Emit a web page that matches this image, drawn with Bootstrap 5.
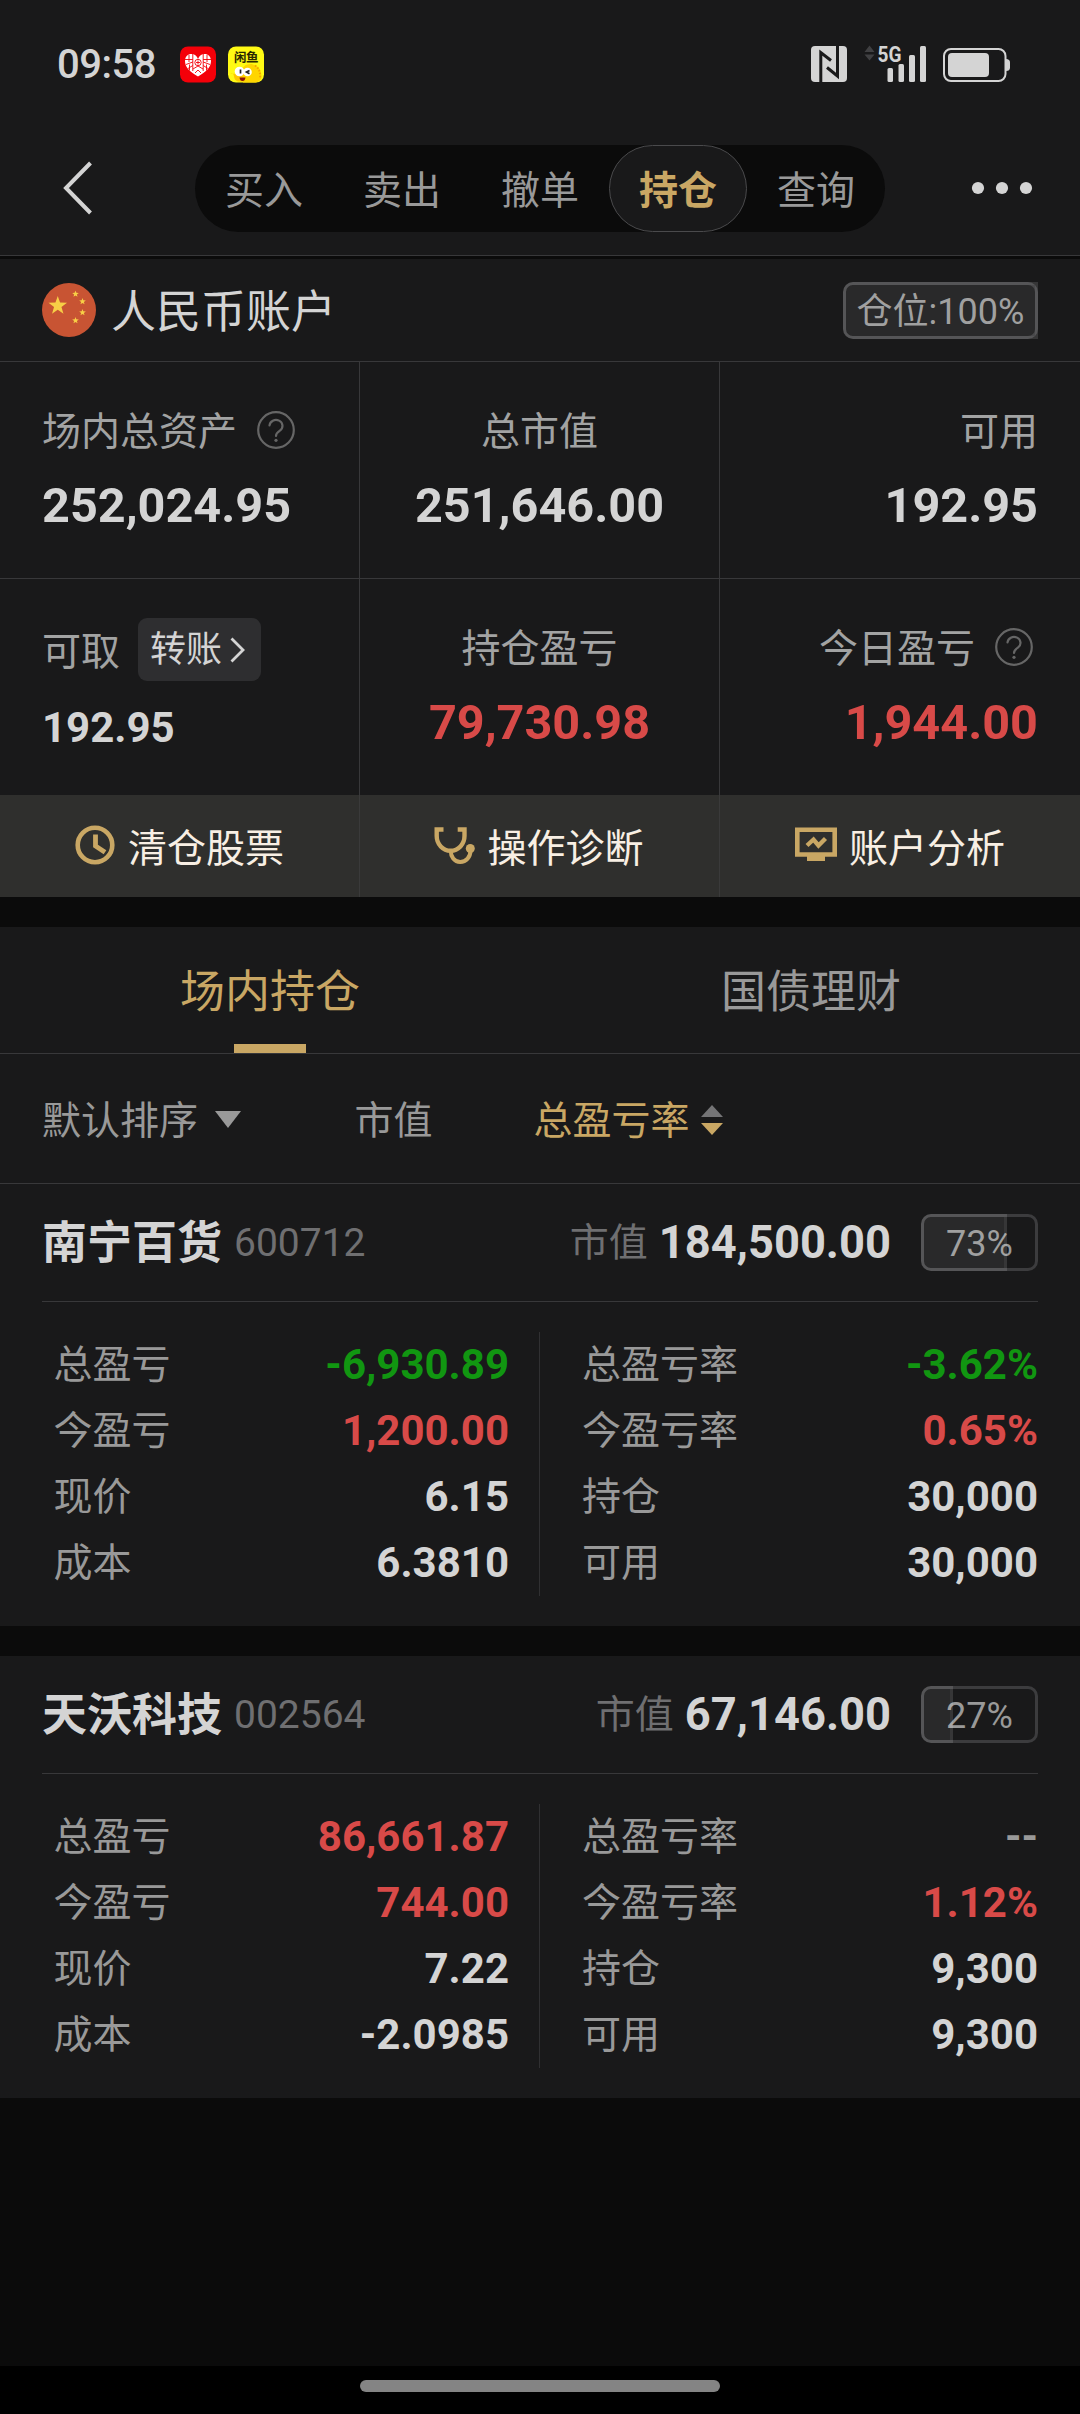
<!DOCTYPE html>
<html lang="zh-CN" data-bs-theme="dark">
<head>
<meta charset="utf-8">
<meta name="viewport" content="width=device-width, initial-scale=1">
<title>持仓</title>
<link href="https://cdn.jsdelivr.net/npm/bootstrap@5.3.0/dist/css/bootstrap.min.css" rel="stylesheet">
<style>
:root{--panel:#19191a;--ground:#0b0b0b;--rule:#38383a;--gold:#c9a764;--ink:#d4d4d4;--soft:#999;--label:#a2a3a3;--dim:#6f6f71;--up:#d84a48;--down:#119611}
body{font-family:Roboto,"Noto Sans CJK SC",sans-serif;background:var(--ground);color:var(--ink);font-size:39px;line-height:50px;min-height:2414px;overflow-x:hidden}
svg{display:block;flex:none;overflow:visible}
.panel{background:var(--panel)}
.px-page{padding-left:42px;padding-right:42px}
.c-label{color:var(--label)}.c-soft{color:var(--soft)}.c-dim{color:var(--dim)}.c-up{color:var(--up)}.c-down{color:var(--down)}.c-gold{color:var(--gold)}.c-ink{color:var(--ink)}
.statusbar{height:130px;padding:46px 70px 0 57px}
.clock-time{font-size:40px;line-height:37px;font-weight:500;width:123px;letter-spacing:-.5px}
.topbar{height:126px;border-bottom:1px solid var(--rule);padding:15px 47px 24px 64px}
.switcher{width:690px;height:87px;border-radius:44px;background:var(--ground);flex-wrap:nowrap;margin-left:103px}
.switcher .nav-link{width:138px;height:87px;padding:0;line-height:90px;border-radius:44px;border:1px solid transparent;color:var(--soft);text-align:center}
.switcher .nav-link.active{background:var(--panel);border-color:#4a4a4c;color:var(--gold);font-weight:700}
.account{height:103px;margin-top:3px;border-bottom:1px solid var(--rule);font-size:45px}
.account-name{margin:6px 0 0 15px}
.ratio{position:relative;height:57px;border:3px solid #3c3c3e;border-radius:10px;font-size:36px;line-height:55px;color:var(--soft);text-align:center}
.ratio-fill{position:absolute;left:-3px;top:-3px;height:57px;border:3px solid rgba(255,255,255,.13);background:rgba(255,255,255,.07);background-clip:padding-box;border-radius:10px 0 0 10px}
.ratio-all{width:195px}.ratio-one{width:117px}
.cell{height:216px;padding-top:45px;border-right:1px solid var(--rule)}
.cell-first{padding-left:42px}.cell-last{padding-right:42px}
.cell:last-child,.act:last-child{border-right:0!important}
.rule-b{border-bottom:1px solid var(--rule)}
.amount{font-size:48.6px;line-height:56px;font-weight:700;margin-top:21px}
.transfer{height:63px;background:#2e2e30;border-radius:9px;font-size:36px;line-height:63px;padding:2px 16px 0 12px;color:var(--ink);border:0;margin-left:18px}
.transfer svg{margin:-2px 0 0 8px}
.act{height:102px;background:#2f2f2d;color:#f8efe4;border-right:1px solid #3a3a3a;gap:12px}
.act span{padding-top:5px}
.deck{margin-top:30px}
.deck .nav-link{height:126px;font-size:45px;line-height:50px;padding:41px 0 0;color:var(--soft);border-radius:0}
.deck .nav-link.active{color:var(--gold)}
.deck .nav-link.active::after{content:"";display:block;width:72px;height:9px;background:var(--gold);margin:26px auto 0}
.sorter{height:130px;padding-top:4px}
.w-a{width:312.500px}.w-b{width:179px}
.holding{height:442px}
.gap-card{margin-top:30px}
.hold-head{height:118px;margin:0 42px;border-bottom:1px solid var(--rule)}
.hold-name{font-size:45px;font-weight:700;padding-top:2px}
.hold-code{margin-left:12px}
.hold-value{font-size:45.3px;font-weight:700;margin:0 30px 0 11px}
.hold-body{margin:30px 42px 0;height:264px}
.hold-l{width:498px;padding:0 30px 0 11.500px;border-right:1px solid #303032}
.hold-r{width:498px;padding-left:42px}
.line66{height:66px;line-height:66px}
.line66 b{font-size:42px;font-weight:700}
.homebar{height:48px;margin-top:268px;padding-top:14px;background:#000}
.homebar div{width:360px;height:12px;border-radius:6px;background:#848484}
</style>
<script src="https://cdn.jsdelivr.net/npm/bootstrap@5.3.0/dist/js/bootstrap.bundle.min.js"></script>
</head>
<body>
<svg width="0" height="0" class="position-absolute" aria-hidden="true">
  <symbol id="help" viewBox="0 0 38 38"><g fill="none" stroke="#666" stroke-width="2.2"><circle cx="19" cy="19" r="17.800"/><path d="M12.500 14.500a6.500 6 0 1 1 10.400 5.200q-3.900 2.600-3.900 5.300" stroke-linecap="round"/></g><circle cx="19" cy="29.300" r="1.600" fill="#666"/></symbol>
  <symbol id="star" viewBox="-10 -10 20 20"><path d="M0-10 2.350-3.240 9.510-3.090 3.800 1.240 5.880 8.090 0 4 -5.880 8.090 -3.800 1.240 -9.510-3.090 -2.350-3.240Z"/></symbol>
</svg>

<header class="panel">
  <div class="statusbar d-flex justify-content-between">
    <div class="d-flex">
      <span class="clock-time">09:58</span>
      <svg width="84" height="36" viewBox="0 0 84 36">
        <rect width="36" height="36" rx="8" y=".5" fill="#f40009"/>
        <path d="M18 30.500C10 26 5 21.500 5 15 5 10.500 8 8 11.500 8q4.500 0 6.500 5 2-5 6.500-5C28 8 31 10.500 31 15 31 21.500 26 26 18 30.500Z" fill="#fff"/>
        <g stroke="#f40009" stroke-width=".9" fill="none"><path d="M12.800 8v17M23.200 8v17M5 13.500h7.800M23.200 13.500H31M6 18.500l6.800-2.500M30 18.500l-6.800-2.500M8 22.500l4.800-3M28 22.500l-4.800-3M9 9v7M27 9v7M9.500 18.500v6M26.500 18.500v6M13 23l5-3 5 3M15 27l3-3 3 3"/><circle cx="18" cy="16.500" r="3.200"/><path d="M16 16.500h4M18 14.500v4"/></g>
        <g transform="translate(48)">
          <rect width="36" height="36" y=".5" rx="8" fill="#fffa14"/>
          <path d="M14 25c0-5 6-8 11-6.500 6 1.500 8 6 8.500 11V32q-2 4-6 4.500H15z" fill="#ffd500"/>
          <path d="M27 19.500q6 4 5 13" stroke="#f3a600" stroke-width="2" stroke-dasharray="1.500 1.500" fill="none"/>
          <path d="M2.500 27.500q3-1 3.500 3t4 5h6l-1-7z" fill="#ffc800"/>
          <circle cx="11.500" cy="25.500" r="4.800" fill="#fff"/><circle cx="19.500" cy="26" r="4.300" fill="#fff"/>
          <path d="M12.500 23.500v4M21.500 24.500l-3 1.500 3 1.700" stroke="#222" stroke-width="1.700" fill="none"/>
          <path d="M11.500 31.500h6q-.5 3.500-3 3.500t-3-3.500z" fill="#8b1509"/>
          <text x="6" y="16" font-size="12.500" font-weight="700" fill="#2b2800" textLength="24.500" font-family="Noto Sans CJK SC">闲鱼</text>
        </g>
      </svg>
    </div>
    <svg width="199" height="38" viewBox="811 46 199 38" fill="#d4d4d4">
      <rect x="811" y="46" width="36" height="36" rx="4"/>
      <path d="M820.800 82.500V52.500L831 60.500M827 67.500l10.500 8.500V45.500" fill="none" stroke="#19191a" stroke-width="3"/>
      <path d="M869.500 45.500l5 6.500h-10zM869.500 60.500l5-6h-10z" fill="#404042"/>
      <text x="877.500" y="62" font-size="22" font-weight="700" textLength="24" lengthAdjust="spacingAndGlyphs">5G</text>
      <rect x="887.500" y="68" width="5.500" height="14" rx="1.500"/><rect x="898.500" y="64" width="5.500" height="18" rx="1.500"/><rect x="909" y="55" width="6" height="27" rx="1.500"/><rect x="920" y="46" width="6" height="36" rx="1.500"/>
      <rect x="944" y="49" width="61.500" height="32" rx="7" fill="none" stroke="#d4d4d4" stroke-width="2"/>
      <rect x="948" y="53" width="41" height="24" rx="4"/><path d="M1006 59q4 0 4 3.500v5q0 3.500-4 3.500z"/>
    </svg>
  </div>
  <nav class="topbar d-flex align-items-center">
    <svg width="28" height="54" viewBox="0 0 28 54" fill="none" stroke="#d4d4d4" stroke-width="4"><path d="M26.500 2 2 27 26.500 52"/></svg>
    <div class="switcher nav nav-pills">
      <a class="nav-link">买入</a><a class="nav-link">卖出</a><a class="nav-link">撤单</a><a class="nav-link active">持仓</a><a class="nav-link">查询</a>
    </div>
    <svg class="ms-auto" width="62" height="14" viewBox="0 0 62 14" fill="#d4d4d4"><circle cx="7" cy="7" r="6.100"/><circle cx="31" cy="7" r="6.100"/><circle cx="55" cy="7" r="6.100"/></svg>
  </nav>
</header>

<section>
  <div class="account panel px-page d-flex align-items-center">
    <svg width="54" height="54" viewBox="0 0 54 54"><circle cx="27" cy="27" r="27" fill="#c85433"/><g fill="#f7cf46"><use href="#star" x="6" y="13" width="19.500" height="19.500"/><use href="#star" x="30" y="7.500" width="7" height="7"/><use href="#star" x="37" y="15" width="7" height="7"/><use href="#star" x="37" y="26" width="7" height="7"/><use href="#star" x="30" y="34" width="7" height="7"/></g></svg>
    <span class="account-name">人民币账户</span>
    <div class="ratio ratio-all ms-auto"><div class="ratio-fill" style="width:195px"></div>仓位:100%</div>
  </div>
  <div class="row g-0 panel rule-b">
    <div class="col-4 cell cell-first">
      <div class="c-label d-flex align-items-center">场内总资产<svg width="38" height="38" style="margin:-4px 0 0 20px"><use href="#help"/></svg></div>
      <div class="amount">252,024.95</div>
    </div>
    <div class="col-4 cell text-center"><div class="c-label">总市值</div><div class="amount">251,646.00</div></div>
    <div class="col-4 cell cell-last text-end"><div class="c-label">可用</div><div class="amount">192.95</div></div>
  </div>
  <div class="row g-0 panel">
    <div class="col-4 cell cell-first" style="padding-top:39px">
      <div class="c-label d-flex align-items-center"><span style="margin-top:5px">可取</span><button class="transfer d-flex align-items-center">转账<svg width="15" height="26" viewBox="0 0 15 26" fill="none" stroke="#d4d4d4" stroke-width="2.800"><path d="M1.500 1.500 13 13 1.500 24.500"/></svg></button></div>
      <div class="fw-bold" style="font-size:42px;margin-top:22px">192.95</div>
    </div>
    <div class="col-4 cell text-center"><div class="c-label">持仓盈亏</div><div class="amount c-up">79,730.98</div></div>
    <div class="col-4 cell cell-last text-end">
      <div class="c-label d-flex align-items-center justify-content-end">今日盈亏<svg width="38" height="38" style="margin:-4px 5px 0 20px"><use href="#help"/></svg></div>
      <div class="amount c-up">1,944.00</div>
    </div>
  </div>
  <div class="row g-0">
    <div class="col-4 act d-flex align-items-center justify-content-center">
      <svg width="40" height="40" viewBox="0 0 40 40" fill="none" stroke="#c9a764" style="margin-top:-3px"><circle cx="20" cy="20" r="17.300" stroke-width="4.600"/><path d="M20.500 9.500V21l9.500 6.300" stroke-width="4.800"/></svg><span style="margin-left:1px">清仓股票</span></div>
    <div class="col-4 act d-flex align-items-center justify-content-center">
      <svg width="42" height="40" viewBox="0 0 42 40" fill="none" stroke="#c9a764" stroke-width="4.400" style="margin:-3px 0 0 -2px"><path d="M10.500 4.500H3.700V11a13.700 14.500 0 0 0 27.800 0V4.500h-6.800"/><path d="M17.700 25.500c0 6 3.500 11.500 9.500 11.500s10.300-5 10.300-11.500" stroke-width="4"/><circle cx="37.300" cy="23.500" r="4.500" fill="#c9a764" stroke="none"/></svg><span>操作诊断</span></div>
    <div class="col-4 act d-flex align-items-center justify-content-center">
      <svg width="42" height="40" viewBox="0 0 42 40" fill="none" stroke="#c9a764" style="margin-top:-3px"><path d="M2.300 4.700h37.400v24.800H2.300z" stroke-width="4.600"/><path d="M12 33.500h18" stroke-width="5"/><path d="M12 20.500l6.500-6 5 6 7-7" stroke-width="4.300"/></svg><span>账户分析</span></div>
  </div>
</section>

<section class="deck">
  <nav class="nav nav-fill panel rule-b text-center">
    <a class="nav-link active col-6">场内持仓</a><a class="nav-link col-6" style="padding-left:2px">国债理财</a>
  </nav>
  <div class="sorter panel rule-b px-page d-flex align-items-center c-soft">
    <div class="w-a d-flex align-items-center">默认排序<svg width="26" height="17" style="margin:-3px 0 0 17px"><path d="M0 0h26L13 17z" fill="#999"/></svg></div>
    <div class="w-b">市值</div>
    <div class="d-flex align-items-center c-gold">总盈亏率<svg width="22" height="30" style="margin:-2px 0 0 11px"><path d="M11 0 22 12H0z" fill="#747476"/><path d="M0 18h22L11 30z" fill="#c9a764"/></svg></div>
  </div>

  <article class="holding panel">
    <div class="hold-head d-flex align-items-center">
      <span class="hold-name">南宁百货</span><span class="hold-code c-dim">600712</span>
      <span class="c-dim ms-auto">市值</span><span class="hold-value">184,500.00</span>
      <div class="ratio ratio-one"><div class="ratio-fill" style="width:85.500px"></div>73%</div>
    </div>
    <div class="hold-body d-flex c-soft">
      <div class="hold-l">
        <div class="line66 d-flex justify-content-between"><span>总盈亏</span><b class="c-down">-6,930.89</b></div>
        <div class="line66 d-flex justify-content-between"><span>今盈亏</span><b class="c-up">1,200.00</b></div>
        <div class="line66 d-flex justify-content-between"><span>现价</span><b class="c-ink">6.15</b></div>
        <div class="line66 d-flex justify-content-between"><span>成本</span><b class="c-ink">6.3810</b></div>
      </div>
      <div class="hold-r">
        <div class="line66 d-flex justify-content-between"><span>总盈亏率</span><b class="c-down">-3.62%</b></div>
        <div class="line66 d-flex justify-content-between"><span>今盈亏率</span><b class="c-up">0.65%</b></div>
        <div class="line66 d-flex justify-content-between"><span>持仓</span><b class="c-ink">30,000</b></div>
        <div class="line66 d-flex justify-content-between"><span>可用</span><b class="c-ink">30,000</b></div>
      </div>
    </div>
  </article>

  <article class="holding panel gap-card">
    <div class="hold-head d-flex align-items-center">
      <span class="hold-name">天沃科技</span><span class="hold-code c-dim">002564</span>
      <span class="c-dim ms-auto">市值</span><span class="hold-value">67,146.00</span>
      <div class="ratio ratio-one"><div class="ratio-fill" style="width:31.500px"></div>27%</div>
    </div>
    <div class="hold-body d-flex c-soft">
      <div class="hold-l">
        <div class="line66 d-flex justify-content-between"><span>总盈亏</span><b class="c-up">86,661.87</b></div>
        <div class="line66 d-flex justify-content-between"><span>今盈亏</span><b class="c-up">744.00</b></div>
        <div class="line66 d-flex justify-content-between"><span>现价</span><b class="c-ink">7.22</b></div>
        <div class="line66 d-flex justify-content-between"><span>成本</span><b class="c-ink">-2.0985</b></div>
      </div>
      <div class="hold-r">
        <div class="line66 d-flex justify-content-between"><span>总盈亏率</span><b>--</b></div>
        <div class="line66 d-flex justify-content-between"><span>今盈亏率</span><b class="c-up">1.12%</b></div>
        <div class="line66 d-flex justify-content-between"><span>持仓</span><b class="c-ink">9,300</b></div>
        <div class="line66 d-flex justify-content-between"><span>可用</span><b class="c-ink">9,300</b></div>
      </div>
    </div>
  </article>
</section>

<footer class="homebar d-flex justify-content-center"><div></div></footer>
</body>
</html>
